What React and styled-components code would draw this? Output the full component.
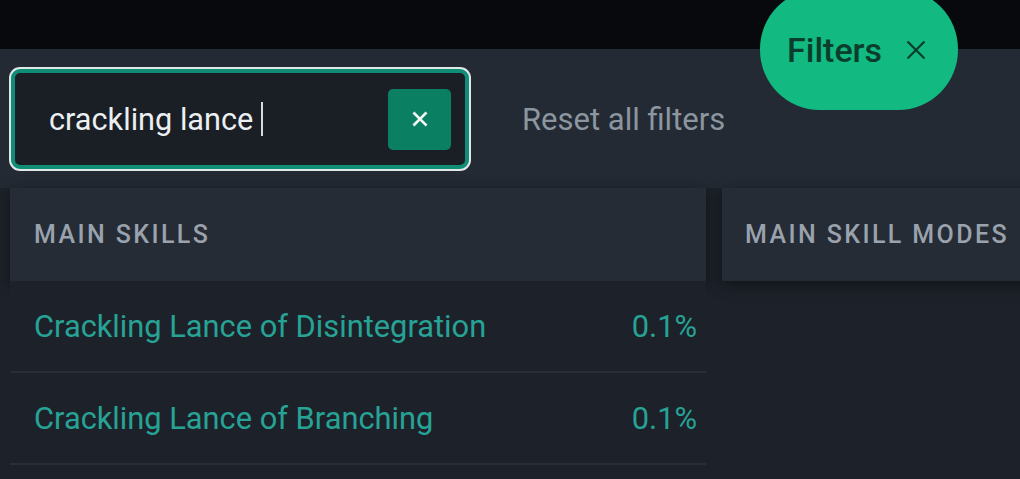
import React from "react";
import styled, { createGlobalStyle } from "styled-components";

const Global = createGlobalStyle`
  html, body { margin: 0; padding: 0; }
  body {
    background: #1d222a;
    font-family: Roboto, "Liberation Sans", sans-serif;
    overflow: hidden;
    width: 1020px;
    height: 479px;
  }
`;

const Page = styled.div`
  position: relative;
  width: 1020px;
  height: 479px;
  overflow: hidden;
  background: #1d222a;
`;

const TopBar = styled.div`
  height: 49px;
  background: #07090c;
`;

const FiltersPill = styled.button`
  position: absolute;
  left: 760px;
  top: -11px;
  width: 198px;
  height: 121px;
  border: none;
  border-radius: 60px;
  background: #12b981;
  display: flex;
  align-items: center;
  justify-content: flex-start;
  gap: 23px;
  padding: 0 0 0 27px;
  color: #0b3d2c;
  font-family: Roboto, "Liberation Sans", sans-serif;
  font-size: 34px;
  font-weight: 500;
  z-index: 5;
`;

const Toolbar = styled.div`
  height: 139px;
  box-sizing: border-box;
  background: #232a33;
  padding: 20px 0 0 11px;
  display: flex;
  align-items: flex-start;
  gap: 53px;
`;

const SearchBox = styled.div`
  width: 458px;
  height: 100px;
  box-sizing: border-box;
  border: 4px solid #0f8d76;
  border-radius: 9px;
  box-shadow: 0 0 0 2px #dfe8e6;
  background: #1a1e25;
  display: flex;
  align-items: center;
  padding: 0 14px 0 34px;
`;

const SearchText = styled.div`
  flex: 1;
  display: flex;
  align-items: center;
  color: #eceff1;
  font-size: 30.7px;
  white-space: pre;
`;

const Caret = styled.span`
  display: inline-block;
  width: 2px;
  height: 34px;
  margin-left: 8px;
  background: #d8dadd;
`;

const ClearButton = styled.button`
  width: 63px;
  height: 61px;
  border: none;
  border-radius: 5px;
  background: #0b7f62;
  display: flex;
  align-items: center;
  justify-content: center;
  padding: 0;
`;

const ResetLink = styled.div`
  height: 100px;
  display: flex;
  align-items: center;
  color: #8c96a1;
  font-size: 31px;
`;

const Content = styled.div`
  display: flex;
  gap: 16px;
  padding-left: 10px;
`;

const Card = styled.div`
  width: ${(p) => p.$width}px;
  flex-shrink: 0;
  display: flex;
  flex-direction: column;
`;

const CardHeader = styled.div`
  height: 93px;
  box-sizing: border-box;
  background: #252c36;
  display: flex;
  align-items: center;
  padding-left: ${(p) => p.$pad}px;
  color: #9aa2ad;
  font-size: 25px;
  font-weight: 500;
  letter-spacing: 2.4px;
  text-transform: uppercase;
  box-shadow: 0 4px 14px rgba(0, 0, 0, 0.45);
  position: relative;
  z-index: 1;
  white-space: nowrap;
`;

const Row = styled.div`
  position: relative;
  z-index: 2;
  height: 90px;
  background: #1d222a;
  border-bottom: 2px solid #2a2e34;
  display: flex;
  align-items: center;
  justify-content: space-between;
  padding: 0 9px 0 24px;
  color: #27a396;
  font-size: 30.8px;
`;

const XIcon = ({ size, color, width }) => (
  <svg width={size} height={size} viewBox="0 0 20 20">
    <path
      d="M3 3 L17 17 M17 3 L3 17"
      stroke={color}
      strokeWidth={width}
      strokeLinecap="square"
      fill="none"
    />
  </svg>
);

const skills = [
  { name: "Crackling Lance of Disintegration", pct: "0.1%" },
  { name: "Crackling Lance of Branching", pct: "0.1%" },
];

export default function App() {
  return (
    <Page>
      <Global />
      <TopBar />
      <FiltersPill>
        <span>Filters</span>
        <XIcon size={22} color="#0b3d2c" width={2} />
      </FiltersPill>
      <Toolbar>
        <SearchBox>
          <SearchText>
            crackling lance
            <Caret />
          </SearchText>
          <ClearButton>
            <XIcon size={16} color="#f2f5f4" width={3.4} />
          </ClearButton>
        </SearchBox>
        <ResetLink>Reset all filters</ResetLink>
      </Toolbar>
      <Content>
        <Card $width={696}>
          <CardHeader $pad={24}>Main Skills</CardHeader>
          {skills.map((s) => (
            <Row key={s.name}>
              <span>{s.name}</span>
              <span>{s.pct}</span>
            </Row>
          ))}
        </Card>
        <Card $width={320}>
          <CardHeader $pad={23}>Main Skill Modes</CardHeader>
        </Card>
      </Content>
    </Page>
  );
}
